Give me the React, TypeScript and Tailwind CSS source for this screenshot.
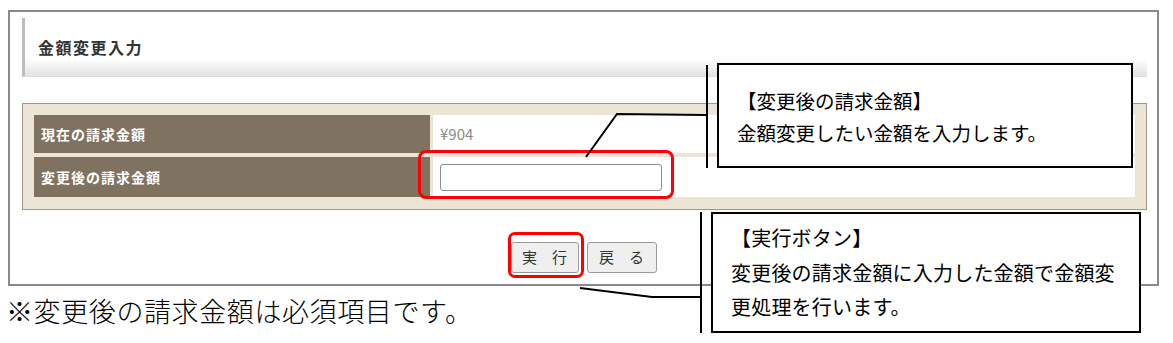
import React from "react";

const jp = { fontFamily: '"Noto Sans CJK JP", "Noto Sans", sans-serif' };

export default function App() {
  return (
    <div className="relative w-[1173px] h-[343px] bg-white overflow-hidden" style={jp}>
      {/* 画面本体 */}
      <div className="ml-[8px] mt-[10px] w-[1151px] h-[276px] border-2 border-[#8a8a8a] pl-[12px] pr-[10px] pt-[6px]">
        <div className="h-[59px] border-l-[3px] border-[#bdbdbd] border-b border-b-[#dcdcdc] bg-linear-to-b from-white from-70% to-[#e3e3e3] flex items-center pl-[13px]">
          <span className="text-[16px] font-bold tracking-[1.5px] text-[#333]">金額変更入力</span>
        </div>

        <div className="mt-[26px] bg-[#ece5d5] border border-[#a39785] px-[11px] pt-[11px] pb-[12px] flex flex-col gap-[4px]">
          <div className="flex h-[38px] gap-[3px]">
            <div className="w-[396px] bg-[#807260] flex items-center pl-[7px] text-white text-[14px] font-bold tracking-[1px]">
              現在の請求金額
            </div>
            <div className="flex-1 bg-white flex items-center pl-[7px] text-[15px] text-[#8a8a8a]">¥904</div>
          </div>
          <div className="flex h-[40px] gap-[3px]">
            <div className="w-[396px] bg-[#807260] flex items-center pl-[7px] text-white text-[14px] font-bold tracking-[1px]">
              変更後の請求金額
            </div>
            <div className="flex-1 bg-white flex items-center pl-[7px]">
              <input className="w-[222px] h-[27px] border border-[#8c8c8c] rounded-[3px] bg-white" />
            </div>
          </div>
        </div>

        <div className="mt-[32px] flex justify-center gap-[8px] pr-[2px]">
          <button className="w-[68px] h-[31px] bg-[#efefef] border border-[#9a9a9a] rounded-[3px] text-[15px] text-[#333]">
            実　行
          </button>
          <button className="w-[70px] h-[31px] bg-[#efefef] border border-[#9a9a9a] rounded-[3px] text-[15px] text-[#333]">
            戻　る
          </button>
        </div>
      </div>

      <p className="ml-[6px] mt-[14px] text-[27px] leading-none font-light tracking-[0.6px] text-black" style={{ fontFamily: '"Liberation Serif", "Noto Sans CJK JP", serif' }}>
        ※変更後の請求金額は必須項目です。
      </p>

      {/* 注釈：赤枠 */}
      <div className="absolute left-[418px] top-[150px] w-[256px] h-[49px] border-[3px] border-[#ff0000] rounded-[8px]" />
      <div className="absolute left-[508px] top-[232px] w-[76px] h-[46px] border-[3px] border-[#ff0000] rounded-[7px]" />

      {/* 注釈：引き出し線 */}
      <svg className="absolute left-0 top-0" width="1173" height="343">
        <polyline points="586,157 617,114 706,115" fill="none" stroke="#000" strokeWidth="2" />
        <polyline points="580,288 652,297 700,297" fill="none" stroke="#000" strokeWidth="2" />
      </svg>

      {/* 注釈1 */}
      <div className="absolute left-[706px] top-[65px] w-[2px] h-[103px] bg-black" />
      <div className="absolute left-[717px] top-[63px] w-[416px] h-[105px] bg-white border-2 border-black pl-[18px] pt-[20px] text-[19.5px] leading-[32px] text-black">
        <div>【変更後の請求金額】</div>
        <div>金額変更したい金額を入力します。</div>
      </div>

      {/* 注釈2 */}
      <div className="absolute left-[700px] top-[212px] w-[2px] h-[121px] bg-black" />
      <div className="absolute left-[711px] top-[212px] w-[430px] h-[121px] bg-white border-2 border-black pl-[18px] pt-[7px] text-[20px] leading-[34.5px] tracking-[0.2px] text-black">
        <div>【実行ボタン】</div>
        <div>変更後の請求金額に入力した金額で金額変</div>
        <div>更処理を行います。</div>
      </div>
    </div>
  );
}
